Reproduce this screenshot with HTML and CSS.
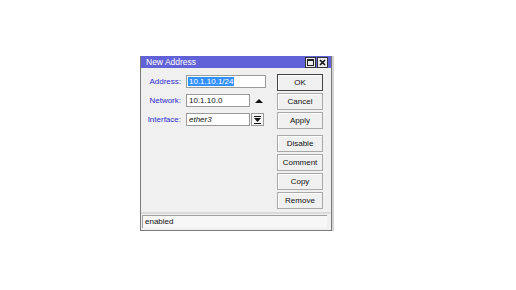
FILE: index.html
```html
<!DOCTYPE html>
<html lang="en">

<head>
    <meta charset="UTF-8">
    <meta name="viewport" content="width=device-width, initial-scale=1.0">
    <title>New Address</title>
    <link rel="stylesheet" href="styles.css">
</head>

<body>
    <div class="window">
        <div class="titlebar">
            <span class="title">New Address</span>
            <div class="title-buttons">
                <span class="tb tb-max"><span class="max-box"></span></span>
                <span class="tb tb-close">
                    <svg width="7" height="7" viewBox="0 0 7 7">
                        <path d="M1 1 L6 6 M6 1 L1 6" stroke="#111" stroke-width="1.6" />
                    </svg>
                </span>
            </div>
        </div>

        <div class="content">
            <div class="fields">
                <div class="row">
                    <label>Address:</label>
                    <div class="input input-wide"><span class="selected">10.1.10.1/24</span></div>
                </div>
                <div class="row">
                    <label>Network:</label>
                    <div class="input">10.1.10.0</div>
                    <span class="arrow-up"></span>
                </div>
                <div class="row">
                    <label>Interface:</label>
                    <div class="input"><em>ether3</em></div>
                    <span class="dropdown">
                        <svg width="7" height="8" viewBox="0 0 7 8">
                            <rect x="0" y="0" width="7" height="1" fill="#111" />
                            <path d="M0 2 L7 2 L3.5 6 Z" fill="#111" />
                            <rect x="0" y="7" width="7" height="1" fill="#111" />
                        </svg>
                    </span>
                </div>
            </div>

            <div class="buttons">
                <button type="button" class="default">OK</button>
                <button type="button">Cancel</button>
                <button type="button">Apply</button>
                <button type="button" class="group-start">Disable</button>
                <button type="button">Comment</button>
                <button type="button">Copy</button>
                <button type="button">Remove</button>
            </div>
        </div>

        <div class="status">
            <div class="status-field">enabled</div>
        </div>
    </div>
</body>

</html>
```

FILE: styles.css
```css
body {
    margin: 0;
    background-color: #fff;
    font-family: "Liberation Sans", Arial, sans-serif;
    font-size: 8px;
    color: #111;
}

/* dialog window */
.window {
    margin: 56px 0 0 140px;
    width: 190px;
    background-color: #f0f0f0;
    border: 1px solid #7a7a7a;
    border-top: none;
    box-shadow: 2px 0 0 #d4d4d4;
}

.titlebar {
    height: 12px;
    background-color: #6262d8;
    color: white;
    display: flex;
    align-items: center;
    justify-content: space-between;
    padding: 0 3px 0 5px;
}

.title {
    font-size: 8.5px;
}

.title-buttons {
    display: flex;
    gap: 1px;
}

.tb {
    width: 9px;
    height: 9px;
    background-color: #ececec;
    border: 1px solid #333;
    display: flex;
    align-items: center;
    justify-content: center;
}

.max-box {
    width: 5px;
    height: 4px;
    border: 1px solid #222;
    border-top-width: 2px;
}

/* form area */
.content {
    display: flex;
    padding: 6px 8px 3px 0;
}

.fields {
    flex: 1;
    display: flex;
    flex-direction: column;
    gap: 6px;
    padding-top: 1px;
}

.row {
    display: flex;
    align-items: center;
    height: 13px;
}

.row label {
    width: 40px;
    text-align: right;
    margin-right: 5px;
    color: #2c2cd0;
}

.input {
    box-sizing: border-box;
    width: 64px;
    height: 13px;
    line-height: 11px;
    padding-left: 2px;
    background-color: #fff;
    border: 1px solid #9a9a9a;
    white-space: nowrap;
    overflow: hidden;
}

.input-wide {
    width: 80px;
}

.selected {
    background-color: #3390ff;
    color: white;
    padding: 0 1px;
    margin-left: -1px;
}

.arrow-up {
    margin-left: 5px;
    width: 0;
    height: 0;
    border-left: 4px solid transparent;
    border-right: 4px solid transparent;
    border-bottom: 4px solid #111;
}

.dropdown {
    box-sizing: border-box;
    margin-left: 1px;
    width: 13px;
    height: 13px;
    border: 1px solid #9a9a9a;
    background-color: #f6f6f6;
    display: flex;
    align-items: center;
    justify-content: center;
}

/* button column */
.buttons {
    display: flex;
    flex-direction: column;
    gap: 2px;
}

button {
    box-sizing: border-box;
    width: 46px;
    height: 17px;
    padding: 0;
    font-family: inherit;
    font-size: 8px;
    color: #111;
    background-color: #f0f0f0;
    border: 1px solid #a8a8a8;
    box-shadow: inset 1px 1px 0 #fff;
}

button.default {
    border-color: #444;
}

button.group-start {
    margin-top: 4px;
}

/* status bar */
.status {
    border-top: 2px solid #dadada;
    padding: 1px 4px 2px 1px;
}

.status-field {
    box-sizing: border-box;
    height: 13px;
    line-height: 11px;
    padding-left: 2px;
    border-left: 1px solid #a0a0a0;
    border-top: 1px solid #a0a0a0;
    background-color: #f7f7f7;
}
```
